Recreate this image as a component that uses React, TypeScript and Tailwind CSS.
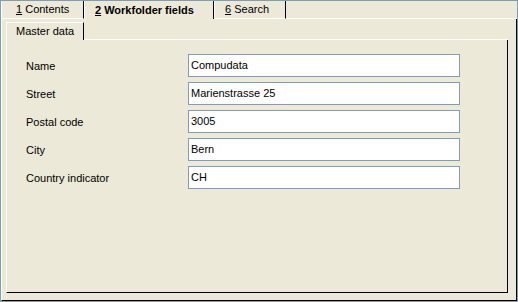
const fields = [
  { label: 'Name', value: 'Compudata' },
  { label: 'Street', value: 'Marienstrasse 25' },
  { label: 'Postal code', value: '3005' },
  { label: 'City', value: 'Bern' },
  { label: 'Country indicator', value: 'CH' },
];

function Tab({ num, label, active, first }: { num: string; label: string; active?: boolean; first?: boolean }) {
  return (
    <div
      className={
        'h-[18px] flex items-center whitespace-nowrap border-l border-r border-l-white border-r-black ' +
        (active ? 'font-bold' : 'border-b border-b-white')
      }
    >
      <span className={(first ? 'pl-[14px]' : 'pl-[10px]') + ' pr-[8px] leading-none'}>
        <span className="underline">{num}</span> {label}
      </span>
    </div>
  );
}

export default function App() {
  return (
    <div
      className="w-[518px] h-[302px] bg-[#ece9d8] border border-[#7f9db9] flex flex-col text-[11px] text-black"
      style={{ fontFamily: '"Liberation Sans", Arial, sans-serif' }}
    >
      <div className="flex h-[18px] shrink-0">
        <div className="w-[83px]">
          <Tab num="1" label="Contents" first />
        </div>
        <div className="w-[130px]">
          <Tab num="2" label="Workfolder fields" active />
        </div>
        <div className="w-[72px]">
          <Tab num="6" label="Search" />
        </div>
        <div className="flex-1 border-b border-b-white" />
      </div>

      <div className="flex-1 flex flex-col border-l border-l-white border-r border-r-black border-b border-b-black pt-[3px] pl-[4px] pr-[8px] pb-[7px]">
        <div className="flex h-[18px] shrink-0">
          <div className="w-[78px] whitespace-nowrap border-l border-t border-r border-l-white border-t-white border-r-black flex items-center pl-[9px]">
            Master data
          </div>
          <div className="flex-1 border-b border-b-white" />
        </div>
        <div className="flex-1 border-l border-l-white border-r border-r-black border-b border-b-black pt-[14px] flex flex-col gap-[5px]">
          {fields.map((f) => (
            <div key={f.label} className="flex items-center h-[23px]">
              <div className="w-[181px] pl-[19px] pt-[2px]">{f.label}</div>
              <div className="w-[272px] h-[23px] bg-white border border-[#7f9db9] pl-[2px] pt-[2px]">
                {f.value}
              </div>
            </div>
          ))}
        </div>
      </div>
    </div>
  );
}
